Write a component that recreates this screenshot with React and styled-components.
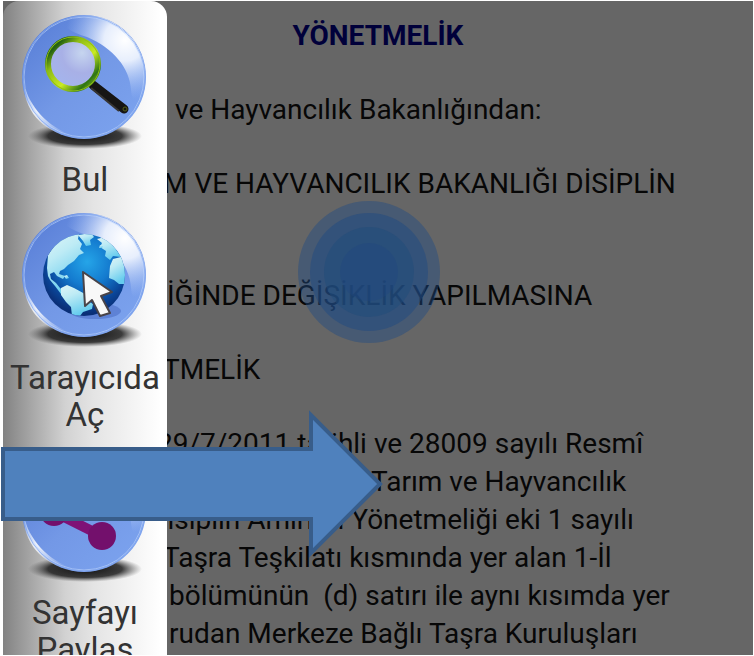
import React from "react";
import styled, { createGlobalStyle } from "styled-components";

const GlobalStyle = createGlobalStyle`
  * { box-sizing: border-box; }
  body { margin: 0; background: #fff; }
`;

const Screen = styled.div`
  position: relative;
  height: 100vh;
  padding: 1px 1px 1px 3px;
  overflow: hidden;
  font-family: Roboto, "Noto Sans", sans-serif;
`;

const Viewport = styled.div`
  position: relative;
  height: 100%;
  overflow: hidden;
  background: #666;
`;

const Article = styled.main`
  display: flex;
  flex-direction: column;
  gap: 37px;
  padding-top: 16px;
  font-size: 28px;
  line-height: 37px;
  color: #070707;
  white-space: pre;
`;

const Title = styled.h1`
  margin: 0;
  font-size: 28px;
  line-height: 37px;
  font-weight: 700;
  text-align: center;
  color: #00003a;
`;

const Paragraph = styled.p`
  margin: 0;
  line-height: ${(p) => (p.$body ? "38px" : "37px")};
`;

const Spacer = styled.div`
  height: 1px;
`;

const Line = styled.span`
  display: block;
  padding-left: ${(p) => p.$start}px;
`;

const Drawer = styled.nav`
  position: absolute;
  top: 0;
  bottom: 0;
  left: 0;
  width: 164px;
  overflow: hidden;
  display: flex;
  flex-direction: column;
  gap: 14px;
  padding-top: 13px;
  border-radius: 16px 16px 0 0;
  background: linear-gradient(90deg, #828282 0%, #a8a8a8 18%, #d2d2d2 38%, #e4e4e4 55%, #f3f3f3 78%, #fff 96%);
`;

const DrawerButton = styled.button`
  display: flex;
  flex-direction: column;
  align-items: center;
  flex: none;
  padding: 0;
  border: 0;
  background: none;
  color: #333;
  font-family: inherit;
  font-size: 33px;
  line-height: 37px;
  text-align: center;
  cursor: pointer;
`;

const Icon = styled.svg`
  display: block;
  width: 164px;
  height: 147px;
`;

const Touch = styled.svg`
  position: absolute;
  left: 298px;
  top: 201px;
  width: 142px;
  height: 142px;
`;

const SwipeArrow = styled.svg`
  position: absolute;
  left: 0;
  top: 406px;
  width: 388px;
  height: 156px;
`;

function Ball({ id, children }) {
  return (
    <Icon viewBox="0 0 164 147" aria-hidden="true">
      <defs>
        <linearGradient id={id + "b"} x1="0" y1=".2" x2=".8" y2="1">
          <stop offset="0" stopColor="#5a80d8" />
          <stop offset=".5" stopColor="#7398e6" />
          <stop offset="1" stopColor="#7ba2ee" />
        </linearGradient>
        <radialGradient id={id + "g"} gradientUnits="userSpaceOnUse" cx="122" cy="26" r="60">
          <stop offset="0" stopColor="#fff" />
          <stop offset=".35" stopColor="#f4f8ff" stopOpacity=".9" />
          <stop offset="1" stopColor="#a9c4f7" stopOpacity="0" />
        </radialGradient>
        <radialGradient id={id + "l"} gradientUnits="userSpaceOnUse" cx="35" cy="97" r="36">
          <stop offset="0" stopColor="#fff" stopOpacity=".9" />
          <stop offset="1" stopColor="#fff" stopOpacity="0" />
        </radialGradient>
        <radialGradient id={id + "s"}>
          <stop offset="0" stopColor="#111" />
          <stop offset=".65" stopColor="#1c1c1c" stopOpacity=".85" />
          <stop offset="1" stopColor="#555" stopOpacity="0" />
        </radialGradient>
      </defs>
      <ellipse cx="82" cy="122" rx="57" ry="13" fill={`url(#${id}s)`} />
      <circle cx="81" cy="63" r="62" fill={`url(#${id}b)`} />
      <path d="M58 5A62 62 0 0 1 137 88Q129 90 128 76C127 54 110 34 84 23Q60 16 58 5Z" fill={`url(#${id}g)`} />
      <path d="M21 72C30 98 48 115 74 123C44 121 22 100 21 72Z" fill={`url(#${id}l)`} />
      <circle cx="81" cy="63" r="60" fill="none" stroke="#bfd5fb" strokeOpacity=".6" />
      <circle cx="81" cy="63" r="61" fill="none" stroke="#86aaf0" strokeOpacity=".8" />
      {children}
    </Icon>
  );
}

function FindIcon() {
  return (
    <Ball id="find">
      <defs>
        <linearGradient id="rim" x1="0" y1="0" x2="1" y2="1">
          <stop offset="0" stopColor="#5b8a0a" />
          <stop offset=".15" stopColor="#236012" />
          <stop offset=".32" stopColor="#8dbb14" />
          <stop offset=".6" stopColor="#c9ea22" />
          <stop offset=".82" stopColor="#2e7515" />
          <stop offset="1" stopColor="#a8d01c" />
        </linearGradient>
        <radialGradient id="lens" cx="68%" cy="28%" r="80%">
          <stop offset="0" stopColor="#c6d5ef" />
          <stop offset=".5" stopColor="#a8b0e6" />
          <stop offset="1" stopColor="#a3b5ee" />
        </radialGradient>
      </defs>
      <path d="M90 71L121 95" stroke="#161514" strokeWidth="9" strokeLinecap="round" />
      <path d="M88 74L116 97" stroke="#373533" strokeWidth="2" />
      <circle cx="122" cy="95" r="2" fill="none" stroke="#566016" />
      <circle cx="70" cy="50" r="25" fill="url(#lens)" stroke="url(#rim)" strokeWidth="6" />
      <circle cx="70" cy="50" r="27" fill="none" stroke="#8dbd15" strokeWidth="1" />
    </Ball>
  );
}

function BrowserIcon() {
  return (
    <Ball id="web">
      <defs>
        <radialGradient id="sea" cx="54%" cy="34%" r="63%">
          <stop offset="0" stopColor="#25a5e8" />
          <stop offset=".45" stopColor="#147bcf" />
          <stop offset=".8" stopColor="#0a4699" />
          <stop offset="1" stopColor="#0a2f77" />
        </radialGradient>
        <linearGradient id="land" x1="0" y1="0" x2=".4" y2="1">
          <stop offset="0" stopColor="#dff5f7" />
          <stop offset=".4" stopColor="#bdebf5" />
          <stop offset="1" stopColor="#66ccee" />
        </linearGradient>
        <clipPath id="globe"><circle cx="81" cy="63" r="41" /></clipPath>
      </defs>
      <ellipse cx="92" cy="99" rx="26" ry="8" fill="#4465bf" opacity=".5" />
      <circle cx="81" cy="63" r="41" fill="url(#sea)" />
      <g clipPath="url(#globe)" fill="url(#land)">
        <path d="M44 56L45 43L54 30L68 23L76 22L75 27L79 32L77 37L81 41L76 43L71 49L65 53L61 57L57 59L56 62L62 64L60 67L54 64L51 60L47 62L48 67L53 71L57 76L61 79L58 82L52 74L47 68L45 64Z" />
        <path d="M75 23L88 21L91 25L87 28L88 33L83 34L80 29Z" />
        <path d="M94 27L102 25L112 36L118 45L110 44L107 48L102 44L103 39L97 35L99 31Z" />
        <path d="M97 33L100 34L99 36L96 36Z" />
        <path d="M110 47L118 45L123 54L122 72L116 72L111 68L106 66L107 54Z" />
        <path d="M58 76L64 73L71 76L82 82L84 88L90 92L89 97L80 100L77 104L69 104L68 95L63 90L58 83Z" />
        <path d="M61 64L64 63L66 66L63 67Z" />
      </g>
      <path d="M80 60L109 80L98 84L107 101L97 104L89 88L82 94Z" fill="#f8f8f8" stroke="#494449" strokeWidth="2" strokeLinejoin="round" />
    </Ball>
  );
}

function ShareIcon() {
  return (
    <Ball id="share">
      <path d="M99 26L51 65L99 89" fill="none" stroke="#7f1276" strokeWidth="10" />
      <g fill="#73106c">
        <circle cx="99" cy="26" r="14" />
        <circle cx="51" cy="65" r="14" />
        <circle cx="99" cy="89" r="14" />
      </g>
    </Ball>
  );
}

export default function App() {
  return (
    <Screen>
      <GlobalStyle />
      <Viewport>
        <Article>
          <Title>YÖNETMELİK</Title>
          <Paragraph><Line $start={172}>ve Hayvancılık Bakanlığından:</Line></Paragraph>
          <Paragraph>
            <Line $start={160}>M VE HAYVANCILIK BAKANLIĞI DİSİPLİN</Line>
          </Paragraph>
          <Spacer />
          <Paragraph><Line $start={164}>İĞİNDE DEĞİŞİKLİK YAPILMASINA</Line></Paragraph>
          <Paragraph><Line $start={160}>TMELİK</Line></Paragraph>
          <Paragraph $body>
            <Line $start={154}>29/7/2011 tarihli ve 28009 sayılı Resmî</Line>
            <Line $start={368}>Tarım ve Hayvancılık</Line>
            <Line $start={146}>Disiplin Amirleri Yönetmeliği eki 1 sayılı</Line>
            <Line $start={160}>Taşra Teşkilatı kısmında yer alan 1-İl</Line>
            <Line $start={166}>bölümünün  (d) satırı ile aynı kısımda yer</Line>
            <Line $start={166}>rudan Merkeze Bağlı Taşra Kuruluşları</Line>
          </Paragraph>
        </Article>
        <Drawer aria-label="Menü">
          <DrawerButton type="button"><FindIcon />Bul</DrawerButton>
          <DrawerButton type="button"><BrowserIcon />Tarayıcıda Aç</DrawerButton>
          <DrawerButton type="button"><ShareIcon />Sayfayı Paylaş</DrawerButton>
        </Drawer>
      </Viewport>
      <Touch viewBox="0 0 142 142" aria-hidden="true">
        <circle cx="71" cy="71" r="71" fill="rgba(33,75,131,.45)" />
        <circle cx="71" cy="71" r="59" fill="rgba(31,74,129,.5)" />
        <circle cx="71" cy="71" r="45" fill="rgba(31,76,122,.5)" />
        <circle cx="71" cy="71" r="29" fill="rgba(33,69,127,.4)" />
      </Touch>
      <SwipeArrow viewBox="0 0 388 156" aria-hidden="true">
        <path d="M3 43H311V9L380 78L311 147V113H3Z" fill="#4f81bd" stroke="#385d8a" strokeWidth="4" />
      </SwipeArrow>
    </Screen>
  );
}
